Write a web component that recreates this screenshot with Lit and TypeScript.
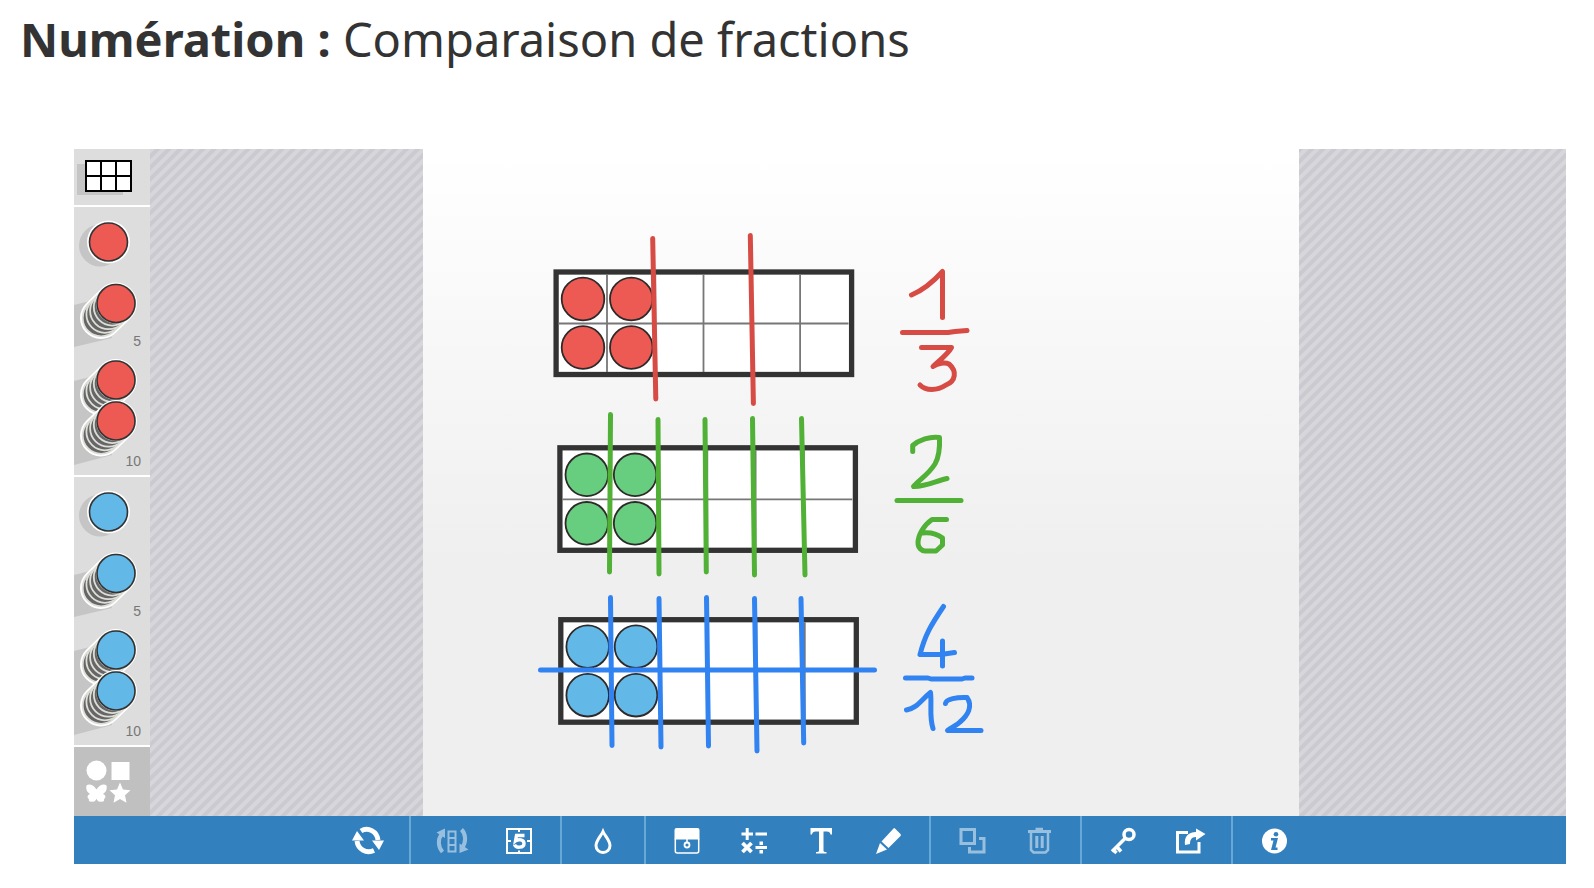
import { LitElement, html, svg, css } from "lit";
import { customElement } from "lit/decorators.js";

type Tool = { label: string; icon: unknown; muted?: boolean };

const toolGroups: Tool[][] = [
  [
    {
      label: "Recommencer",
      icon: svg`<g fill="none" stroke="#fff" stroke-width="5"><path d="M13 11C20 6.500 29 11.500 30 20"/><path d="M26 30.500C18 34 10 29 9 21"/></g><path fill="#fff" d="M24 20.500h12l-5 9.500zM4 20.500L9 11l7 9.500z"/>`,
    },
  ],
  [
    {
      label: "Pivoter",
      muted: true,
      icon: svg`<g fill="none" stroke="#fff" stroke-width="4"><path d="M10.500 32C6 27 5.500 19 10 14"/><path d="M29.500 9.500C34 14 34.500 22 30 28"/></g><path fill="#fff" d="M4.500 12.500L13 8.500v9.500zM27.500 33v-9.500l9 6z"/><g fill="none" stroke="#fff" stroke-width="2"><path d="M16.500 11.500h7v20h-7zM16.500 18h7M16.500 25h7"/></g>`,
    },
    {
      label: "Afficher le nombre",
      icon: svg`<path fill="none" stroke="#fff" stroke-width="2" d="M8 9h24v24H8zM20 9v3M20 30.500v3M8 21h4M28 21h4"/><path fill="none" stroke="#fff" stroke-width="3.400" d="M25.500 15.500h-8l-1 5.500c3-2.200 8.500-1.600 8.500 2.400 0 4.600-8 5-9.500 1.200"/>`,
    },
  ],
  [
    {
      label: "Couleur",
      icon: svg`<path fill="none" stroke="#fff" stroke-width="3" d="M20 11.500C18 16 13 20.500 13 25.500a7 7 0 0 0 14 0C27 20.500 22 16 20 11.500z"/>`,
    },
  ],
  [
    {
      label: "Rideau",
      icon: svg`<path fill="#fff" d="M9.500 8h21a2 2 0 0 1 2 2v9.500h-25V10a2 2 0 0 1 2-2z"/><path fill="none" stroke="#fff" stroke-width="1.500" d="M8.300 18.500v12.500a2 2 0 0 0 2 2h19.400a2 2 0 0 0 2-2V18.500M20 19v4"/><circle cx="20" cy="25" r="2.500" fill="none" stroke="#fff" stroke-width="1.800"/>`,
    },
    {
      label: "Calcul",
      icon: svg`<path fill="none" stroke="#fff" stroke-width="3" d="M7.500 14h11.500M13.200 8v12M21.500 14H33M21.500 27.500H33"/><path fill="none" stroke="#fff" stroke-width="3.800" d="M8.500 23l9 9M17.500 23l-9 9"/><path fill="#fff" d="M25.500 21.500h3.500V25h-3.500zM25.500 30h3.500v3.500h-3.500z"/>`,
    },
    {
      label: "Texte",
      icon: svg`<path fill="#fff" d="M9.500 8h21.500v6.500h-1.500c-.5-2.300-1.500-3-3.500-3h-3.500v19c0 1 .8 1.500 3 1.500v1.500H15V32c2.200 0 3-.5 3-1.500v-19h-3.500c-2 0-3 .7-3.500 3H9.500z"/>`,
    },
    {
      label: "Dessin",
      icon: svg`<path fill="#fff" d="M27 8.500l5.500 5.500a1.500 1.500 0 0 1 0 2L20.500 28 13.500 21.500 25.500 8.500a1 1 0 0 1 1.500 0zM12 23l7 6.500L8 34z"/>`,
    },
  ],
  [
    {
      label: "Dupliquer",
      muted: true,
      icon: svg`<path fill="none" stroke="#fff" stroke-width="3" d="M9 9.500h13.500v14H9zM27 18.500h5V32H17.500v-5"/>`,
    },
    {
      label: "Supprimer",
      muted: true,
      icon: svg`<g fill="none" stroke="#fff"><path stroke-width="3" d="M9 11.500h23M16.500 9.300h7.500"/><path stroke-width="2.500" d="M12 12.500V30l2.500 2.500h12L29 30V12.500"/><path stroke-width="3" d="M17.800 16v12M23.200 16v12"/></g>`,
    },
  ],
  [
    {
      label: "Accès",
      icon: svg`<g fill="none" stroke="#fff"><circle cx="26" cy="14.500" r="5" stroke-width="3.500"/><path stroke-width="3.500" d="M22.500 18L9 31.500M14 27l4 4.500M10 29.500l3.500 3.500"/></g>`,
    },
    {
      label: "Partager",
      icon: svg`<path fill="none" stroke="#fff" stroke-width="3" d="M18 12.500H7.500V32H29V22"/><path fill="#fff" d="M26 8.500l9.500 5.500-9.500 6.500V17c-5 0-6 3.500-6 7l-5 1c-1-8 3-13 11-13z"/>`,
    },
  ],
  [
    {
      label: "Informations",
      icon: svg`<circle cx="20.500" cy="21" r="12.500" fill="#fff"/><g fill="#3380bf"><circle cx="22" cy="14.300" r="2.300"/><path d="M17 18h7l-2.500 9.500h2V30h-6.500l2.500-9.500H17z"/></g>`,
    },
  ],
];

const disc = (cx: number, cy: number, color: string) => svg`
  <circle cx=${cx} cy=${cy} r="21.500" fill="#fff" />
  <circle cx=${cx} cy=${cy} r="19" fill=${color} stroke="#333" stroke-width="1.600" />`;

/* Five counters piled diagonally, seen from above. */
const pile = (cx: number, cy: number, color: string) => svg`
  <path stroke="#fff" stroke-width="42" stroke-linecap="round" d="M${cx - 15} ${cy + 14.5}L${cx} ${cy}" />
  ${[4, 3, 2, 1].map(
    (i) => svg`<circle cx=${cx - i * 3.7} cy=${cy + i * 3.6} r="18.500" fill="#666" stroke="#deded9" stroke-width="1.800" />`
  )}
  <circle cx=${cx} cy=${cy} r="20" fill="#deded9" />
  <circle cx=${cx} cy=${cy} r="19" fill=${color} stroke="#333" stroke-width="1.600" />`;

@customElement("counter-tray")
export class CounterTray extends LitElement {
  static properties = { color: {}, name: {} };
  declare color: string;
  declare name: string;

  static styles = css`
    :host {
      display: flex;
      flex-direction: column;
      background: #dddddd;
    }
    button {
      position: relative;
      display: block;
      border: 0;
      padding: 0;
      background: none;
      cursor: pointer;
    }
    svg {
      display: block;
    }
    .count {
      position: absolute;
      right: 9px;
      bottom: 5px;
      font: 14px/18px "Liberation Sans", Arial, sans-serif;
      color: #777;
    }
  `;

  render() {
    return html`
      <button aria-label="1 jeton ${this.name}">
        <svg width="76" height="60" viewBox="0 0 76 60">
          <circle cx="26" cy="38.500" r="21" fill="#c5c5c5" />
          ${disc(34.5, 35, this.color)}
        </svg>
      </button>
      <button aria-label="5 jetons ${this.name}">
        <svg width="76" height="88" viewBox="0 0 76 88">
          <path fill="#c5c5c5" d="M0 38L24 32L38 71L0 80z" />
          ${pile(42, 36.5, this.color)}
        </svg>
        <span class="count">5</span>
      </button>
      <button aria-label="10 jetons ${this.name}">
        <svg width="76" height="120" viewBox="0 0 76 120">
          <path fill="#c5c5c5" d="M0 26L24 20L38 100L0 110z" />
          ${pile(42, 25, this.color)} ${pile(42, 66, this.color)}
        </svg>
        <span class="count">10</span>
      </button>
    `;
  }
}

/* A 2 x 6 frame with its first four cells filled. */
const frame = (x: number, y: number, color: string) => svg`
  <g transform="translate(${x} ${y})">
    <rect x="2.600" y="2.500" width="295.500" height="102.500" fill="#fff" stroke="#333" stroke-width="5.300" />
    <path fill="none" stroke="#777" stroke-width="1.800"
      d="M53.500 5v97.500M101.800 5v97.500M150 5v97.500M198.300 5v97.500M246.600 5v97.500M5 54h290" />
    ${[29.5, 77.8].map((cx) =>
      [29.5, 78].map(
        (cy) => svg`<circle cx=${cx} cy=${cy} r="21.300" fill=${color} stroke="#2f2a2a" stroke-width="1.800" />`
      )
    )}
  </g>`;

@customElement("fraction-board")
export class FractionBoard extends LitElement {
  static styles = css`
    :host {
      display: block;
      background: linear-gradient(#ffffff, #efefef 62%);
    }
    svg {
      display: block;
      width: 100%;
    }
    .ink {
      fill: none;
      stroke-width: 5;
      stroke-linecap: round;
      stroke-linejoin: round;
    }
    .red {
      stroke: #d74b45;
    }
    .green {
      stroke: #50b136;
    }
    .blue {
      stroke: #3083f1;
    }
  `;

  render() {
    return html`
      <svg viewBox="423 149 876 667" role="img" aria-label="Un tiers, deux sixièmes, quatre douzièmes">
        ${frame(553.5, 269.5, "#ed5a53")} ${frame(557.3, 445.3, "#67ce80")}
        ${frame(558.2, 617.2, "#62b8e6")}
        <g class="ink red">
          <path d="M652.700 238.500L655.800 399M750.300 235.500L753.400 403.500" />
          <path d="M911.500 295C921 291 933 282 942.500 271.500V317.500" />
          <path d="M902.500 332.500H948L955 331.500L967 330.500" />
          <path d="M921.500 347.500H951.500C948 354 940 360 933 366.500C938 363 945 362 949 364C957 371 956 381 946 385C937 391 926 391 920 385" />
        </g>
        <g class="ink green">
          <path d="M610.500 414.500L609.500 572M658 419.500L659 574M705 419.500L706.300 572M752.500 418.500L754.500 575M801.500 418.500L805 575" />
          <path d="M912.700 451.500V445.500C919 440 930 436 939.500 437.500C940 449 939 457 935 464C928 475 920 479 913.500 486.500C925 487 936 481 947 478.500" />
          <path d="M897 500.500H961" />
          <path d="M946.500 519.500H932C924 525 918 535 918 543C918 548 922 551 925 551H936L942.500 545V538C936 533 929 532 922 533" />
        </g>
        <g class="ink blue">
          <path d="M610.500 597.500L612 745.500M659 598.500L661 747M706.500 597.500L708.500 746M754.500 598.500L757 751M801 598.500L803.700 743M540.500 670H874.500" />
          <path d="M943.500 606.500C931 625 925 635 920 654.500H941L954.500 652.500M942.500 641V666" />
          <path d="M905.500 678H928L931 679H962L965 678H972" />
          <path d="M906.500 710C917 708 920 701 930.500 692.500C932 705 929 716 933 728.500" />
          <path d="M945.500 703.500C946 699 957 697 967 697.500C973 706 968 715 960 722C956 726 952 727 947.500 730.500H981" />
        </g>
      </svg>
    `;
  }
}

@customElement("app-root")
export class AppRoot extends LitElement {
  static styles = css`
    :host {
      display: block;
      background: #fff;
      color: #333;
      font-family: "Noto Sans", "Open Sans", sans-serif;
    }
    h1 {
      margin: 0;
      padding: 7px 18px 78px 20px;
      font-size: 47px;
      line-height: 64px;
      font-weight: 400;
    }
    strong {
      font-weight: 700;
    }
    main {
      margin: 0 28px 24px 74px;
    }
    .workspace {
      display: grid;
      grid-template-columns: 76px 1fr;
    }
    .sidebar {
      display: flex;
      flex-direction: column;
      gap: 2px;
      background: #fff;
    }
    .sidebar button {
      display: block;
      border: 0;
      padding: 0;
      background: #dddddd;
      cursor: pointer;
    }
    .sidebar .shapes {
      flex: 1;
      background: #c0c0c0;
    }
    svg {
      display: block;
    }
    .canvas {
      display: grid;
      grid-template-columns: 273fr 876fr 267fr;
      background: repeating-linear-gradient(
        135deg,
        #d6d6db 0,
        #d6d6db 3px,
        #cacad0 4px,
        #cacad0 7px,
        #d6d6db 8px
      );
    }
    fraction-board {
      grid-column: 2;
    }
    .toolbar {
      display: flex;
      justify-content: center;
      height: 48px;
      padding-left: 2px;
      background: #3380bf;
    }
    .group {
      display: flex;
      align-items: center;
      gap: 27px;
      padding: 0 21px;
    }
    .group + .group {
      border-left: 2px solid #66a8d6;
    }
    .tool {
      border: 0;
      padding: 0;
      background: none;
      cursor: pointer;
    }
    .tool:disabled {
      opacity: 0.5;
    }
  `;

  render() {
    return html`
      <h1><strong>Numération :</strong> Comparaison de fractions</h1>
      <main>
        <div class="workspace">
          <nav class="sidebar" aria-label="Matériel">
            <button aria-label="Grille">
              <svg width="76" height="56" viewBox="0 0 76 56">
                <path fill="#c5c5c5" d="M3 15h46v31H3z" />
                <path fill="#fff" stroke="#000" stroke-width="2" d="M12 12h45v30h-45zM27 12v30M42 12v30M12 27h45" />
              </svg>
            </button>
            <counter-tray color="#ed5a53" name="rouge"></counter-tray>
            <counter-tray color="#62b8e6" name="bleu"></counter-tray>
            <button class="shapes" aria-label="Autres formes">
              <svg width="76" height="69" viewBox="0 0 76 69">
                <g fill="#fff">
                  <circle cx="22.500" cy="23.500" r="10" />
                  <path d="M37.500 15h18v18h-18z" />
                  <path d="M46 35.500l3 7 7.500.8-5.500 5 1.500 7.500-6.500-3.700-6.500 3.700 1.500-7.500-5.500-5 7.500-.8z" />
                  <path d="M22.500 42.500C20 38 15 36 12.500 38.500c-1 4 1 7 3.500 8.500-3 1-3 4-1 5-1 2 1.500 3.500 3 2.500 2 1 4-1 4.500-3 .5 2 2.500 4 4.500 3 1.500 1 4-.5 3-2.500 2-1 2-4-1-5 2.500-1.500 4.500-4.500 3.500-8.500-2.500-2.500-7.500-.5-10 4z" />
                </g>
              </svg>
            </button>
          </nav>
          <div class="canvas"><fraction-board></fraction-board></div>
        </div>
        <div class="toolbar" role="toolbar" aria-label="Outils">
          ${toolGroups.map(
            (group) => html`<div class="group">
              ${group.map(
                (tool) => html`<button class="tool" aria-label=${tool.label} ?disabled=${tool.muted}>
                  <svg width="40" height="40" viewBox="0 0 40 40">${tool.icon}</svg>
                </button>`
              )}
            </div>`
          )}
        </div>
      </main>
    `;
  }
}
